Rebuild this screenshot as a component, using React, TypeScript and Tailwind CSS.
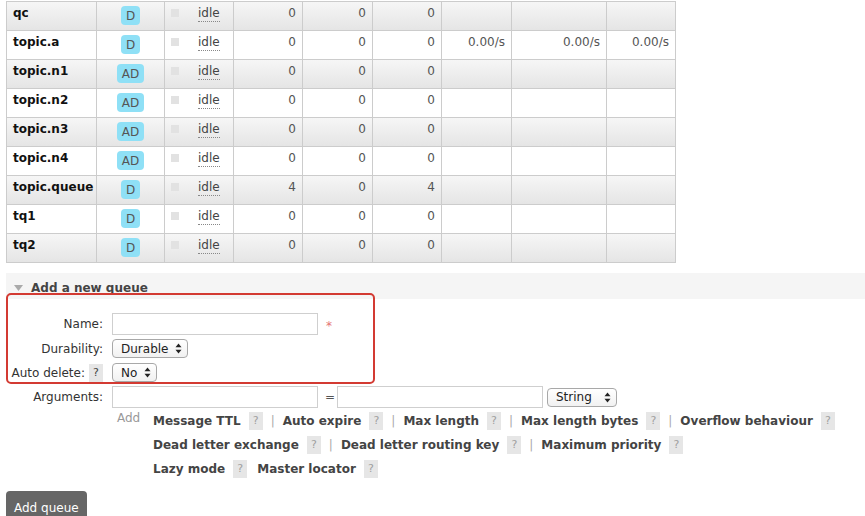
import type { ReactNode } from 'react';

type QueueRow = {
  name: string;
  features: 'D' | 'AD';
  ready: number;
  unacked: number;
  total: number;
  rates?: [string, string, string];
};

const QUEUES: QueueRow[] = [
  { name: 'qc', features: 'D', ready: 0, unacked: 0, total: 0 },
  { name: 'topic.a', features: 'D', ready: 0, unacked: 0, total: 0, rates: ['0.00/s', '0.00/s', '0.00/s'] },
  { name: 'topic.n1', features: 'AD', ready: 0, unacked: 0, total: 0 },
  { name: 'topic.n2', features: 'AD', ready: 0, unacked: 0, total: 0 },
  { name: 'topic.n3', features: 'AD', ready: 0, unacked: 0, total: 0 },
  { name: 'topic.n4', features: 'AD', ready: 0, unacked: 0, total: 0 },
  { name: 'topic.queue', features: 'D', ready: 4, unacked: 0, total: 4 },
  { name: 'tq1', features: 'D', ready: 0, unacked: 0, total: 0 },
  { name: 'tq2', features: 'D', ready: 0, unacked: 0, total: 0 },
];

/** Grey "?" help chip used next to labels and argument shortcuts. */
function Help({ dark = false }: { dark?: boolean }) {
  return (
    <span
      className={`inline-flex h-[18px] w-[14px] items-center justify-center bg-[#e6e6e6] text-[11px] ${
        dark ? 'text-[#444]' : 'text-[#a0a0a0]'
      }`}
    >
      ?
    </span>
  );
}

/** Mac-style native select look, drawn by hand. */
function FakeSelect({ value, width }: { value: string; width: string }) {
  return (
    <div
      className={`flex h-[19px] items-center justify-between rounded-[4px] border border-[#a8a8a8] bg-gradient-to-b from-white to-[#f1f1f1] pl-[8px] pr-[5px] text-[12px] text-[#222] ${width}`}
    >
      <span>{value}</span>
      <svg width="7" height="11" viewBox="0 0 7 11" className="fill-[#222]">
        <path d="M3.5 0.5 L6.5 4.2 H0.5 Z" />
        <path d="M3.5 10.5 L6.5 6.8 H0.5 Z" />
      </svg>
    </div>
  );
}

function Cell({ w, children, right = false, last = false }: { w: string; children?: ReactNode; right?: boolean; last?: boolean }) {
  return (
    <div
      className={`h-full shrink-0 px-[6px] pt-[4px] ${w} ${right ? 'text-right' : ''} ${
        last ? '' : 'border-r border-[#cccccc]'
      }`}
    >
      {children}
    </div>
  );
}

function ArgLink({ label, sep = true }: { label: string; sep?: boolean }) {
  return (
    <span className="inline-flex items-center">
      <span className="font-bold text-[#444]">{label}</span>
      <span className="ml-[8px]">
        <Help />
      </span>
      {sep && <span className="mx-[8px] text-[#aaa]">|</span>}
    </span>
  );
}

export default function App() {
  return (
    <div className="relative h-[516px] w-[865px] overflow-hidden bg-white font-['Verdana','DejaVu_Sans',sans-serif] text-[12px] leading-[14px] text-[#333]">
      {/* Queue table */}
      <div className="ml-[6px] mt-px w-[670px] border border-b-0 border-[#cccccc]">
        {QUEUES.map((q, i) => (
          <div
            key={q.name}
            className={`flex h-[29px] border-b border-[#cccccc] ${
              i % 2 === 0 ? 'bg-gradient-to-b from-[#f6f6f6] to-[#e5e5e5]' : 'bg-white'
            }`}
          >
            <Cell w="w-[90px]">
              <span className="font-bold text-[#111]">{q.name}</span>
            </Cell>
            <Cell w="w-[68px]">
              <div className="flex justify-center">
                <span className="flex h-[19px] items-center rounded-[4px] bg-[#8fe0f6] px-[5px] text-[#555]">
                  {q.features}
                </span>
              </div>
            </Cell>
            <Cell w="w-[69px]">
              <div className="flex items-start">
                <span className="mt-[3px] h-[8px] w-[8px] bg-[#e2e2e2]" />
                <span className="ml-[19px] border-b border-dotted border-[#888] leading-[15px] text-[#444]">idle</span>
              </div>
            </Cell>
            <Cell w="w-[69px]" right>
              <span className="text-[#555]">{q.ready}</span>
            </Cell>
            <Cell w="w-[70px]" right>
              <span className="text-[#555]">{q.unacked}</span>
            </Cell>
            <Cell w="w-[69px]" right>
              <span className="text-[#555]">{q.total}</span>
            </Cell>
            <Cell w="w-[70px]" right>
              <span className="text-[#555]">{q.rates?.[0]}</span>
            </Cell>
            <Cell w="w-[95px]" right>
              <span className="text-[#555]">{q.rates?.[1]}</span>
            </Cell>
            <Cell w="w-[68px]" right last>
              <span className="text-[#555]">{q.rates?.[2]}</span>
            </Cell>
          </div>
        ))}
      </div>

      {/* Section header */}
      <div className="ml-[6px] mt-[10px] flex h-[26px] items-center bg-[#f5f5f5] pl-[8px] pt-[3px]">
        <svg width="9" height="6" viewBox="0 0 9 6" className="fill-[#aaaaaa]">
          <path d="M0 0 H9 L4.5 6 Z" />
        </svg>
        <span className="ml-[8px] font-bold text-[#444]">Add a new queue</span>
      </div>

      {/* Form */}
      <div className="ml-[6px]">
        <div className="mt-[14px] flex h-[22px] items-center">
          <label className="w-[97px] text-right">Name:</label>
          <div className="ml-[9px] h-[22px] w-[206px] border border-[#cfcfcf] bg-white" />
          <span className="ml-[8px] mt-[4px] text-[#e57373]">*</span>
        </div>
        <div className="mt-[4px] flex h-[19px] items-center">
          <label className="w-[97px] text-right">Durability:</label>
          <div className="ml-[9px]">
            <FakeSelect value="Durable" width="w-[76px]" />
          </div>
        </div>
        <div className="mt-[5px] flex h-[19px] items-center">
          <div className="flex w-[97px] items-center justify-end">
            <label>Auto delete:</label>
            <span className="ml-[4px]">
              <Help dark />
            </span>
          </div>
          <div className="ml-[9px]">
            <FakeSelect value="No" width="w-[45px]" />
          </div>
        </div>
        <div className="mt-[4px] flex h-[22px] items-center">
          <label className="w-[97px] text-right">Arguments:</label>
          <div className="ml-[9px] h-[22px] w-[206px] border border-[#cfcfcf] bg-white" />
          <span className="ml-[7px] w-[12px] text-[#555]">=</span>
          <div className="h-[22px] w-[206px] border border-[#cfcfcf] bg-white" />
          <div className="ml-[4px]">
            <FakeSelect value="String" width="w-[70px]" />
          </div>
        </div>

        <div className="ml-[111px] mt-[2px] flex">
          <span className="mt-[1px] w-[36px] text-[#999]">Add</span>
          <div className="flex flex-col gap-[6px] pt-[2px]">
            <div className="flex h-[18px] items-center">
              <ArgLink label="Message TTL" />
              <ArgLink label="Auto expire" />
              <ArgLink label="Max length" />
              <ArgLink label="Max length bytes" />
              <ArgLink label="Overflow behaviour" sep={false} />
            </div>
            <div className="flex h-[18px] items-center">
              <ArgLink label="Dead letter exchange" />
              <ArgLink label="Dead letter routing key" />
              <ArgLink label="Maximum priority" sep={false} />
            </div>
            <div className="flex h-[18px] items-center">
              <ArgLink label="Lazy mode" sep={false} />
              <span className="ml-[10px]">
                <ArgLink label="Master locator" sep={false} />
              </span>
            </div>
          </div>
        </div>

        <button
          type="button"
          className="mt-[13px] flex h-[30px] items-start rounded-t-[4px] bg-[#666666] px-[8px] pt-[10px] text-[12px] font-normal text-white"
        >
          Add queue
        </button>
      </div>

      {/* Highlight annotation around the required fields */}
      <div className="pointer-events-none absolute left-[6px] top-[293px] h-[91px] w-[369px] rounded-[5px] border-2 border-[#d33a32]" />
    </div>
  );
}
